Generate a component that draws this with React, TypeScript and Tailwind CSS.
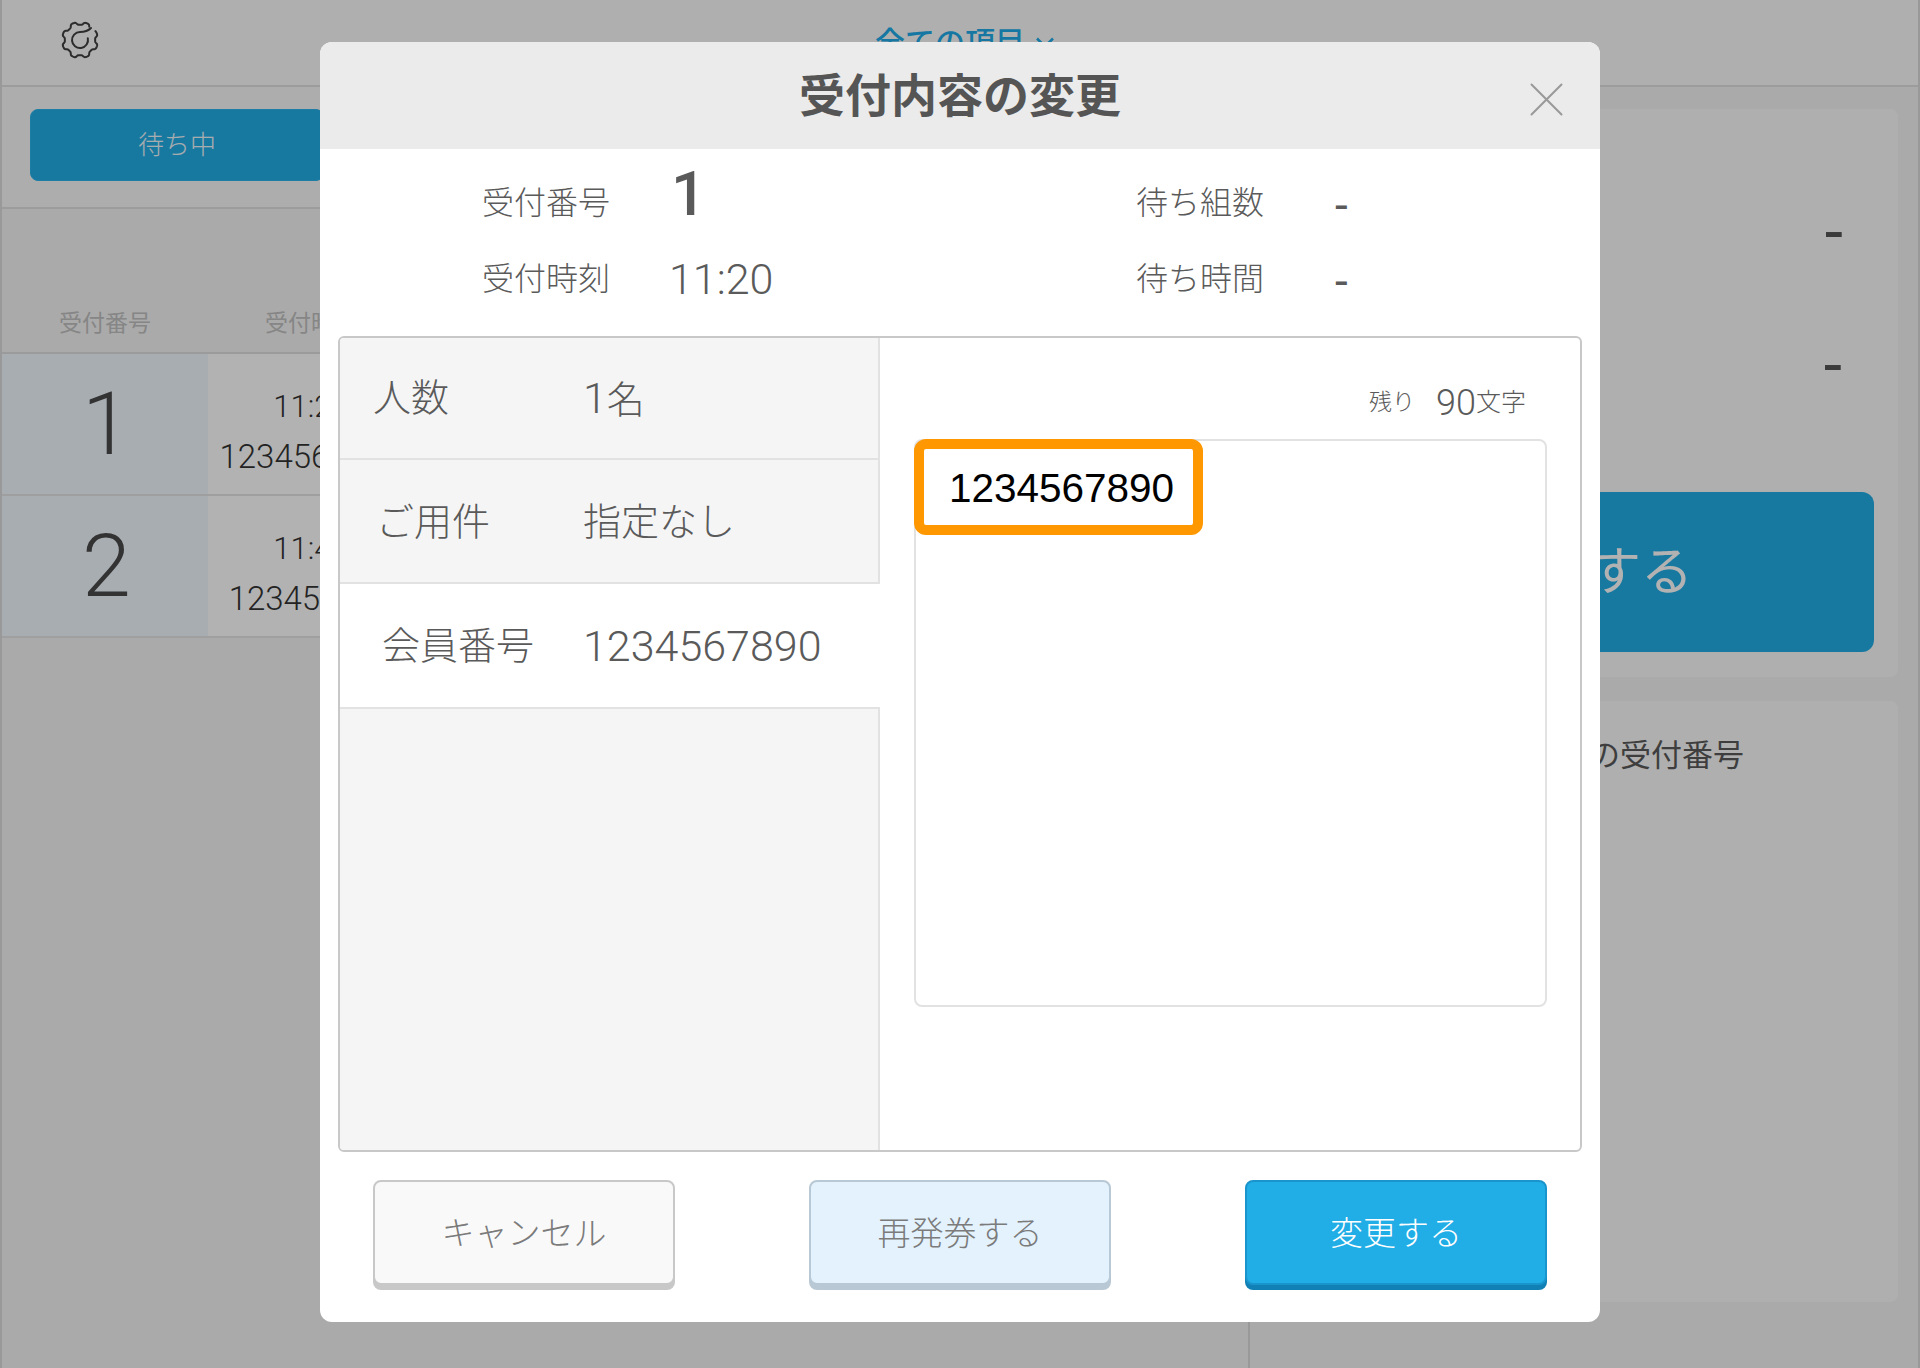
import type { ReactNode } from 'react';

const jp = "font-['Roboto','Noto_Sans_CJK_JP',sans-serif]";

// gear outline drawn as an open line, leaving a gap at the upper right
function gearPath() {
  const pts: string[] = [];
  const teeth = 8;
  const start = -30;
  const sweep = 335;
  for (let i = 0; i <= 200; i++) {
    const deg = start + (sweep * i) / 200;
    const a = (deg * Math.PI) / 180;
    const wave = Math.tanh(2 * Math.cos(teeth * (a + Math.PI / 8)));
    const r = 16.6 + 1.5 * wave;
    pts.push(`${(20 + r * Math.cos(a)).toFixed(2)} ${(20 + r * Math.sin(a)).toFixed(2)}`);
  }
  return 'M' + pts.join('L');
}

function GearIcon() {
  return (
    <svg width="40" height="40" viewBox="0 0 40 40" fill="none" stroke="#3f3f3f" strokeWidth="2" strokeLinecap="round">
      <path d={gearPath()} />
      <path d="M27.8 18.2A8 8 0 1 1 20 12Q27 12 31 8" />
    </svg>
  );
}

function CloseIcon() {
  return (
    <svg width="33" height="33" viewBox="0 0 33 33" fill="none" stroke="#999999" strokeWidth="2" strokeLinecap="round">
      <path d="M1.5 1.5L31.5 31.5M31.5 1.5L1.5 31.5" />
    </svg>
  );
}

function ChevronIcon() {
  return (
    <svg width="18" height="12" viewBox="0 0 18 12" fill="none" stroke="#20ade9" strokeWidth="2.5">
      <path d="M1 1.5L9 9.5L17 1.5" />
    </svg>
  );
}

function QueueRow({ num, time, member }: { num: string; time: string; member: string }) {
  return (
    <div className="flex h-[142px] border-b-2 border-[#e4e4e4]">
      <div className="flex w-[206px] items-center justify-center bg-[#f1f8ff] pl-[3px] text-[88px] font-light text-[#4a4a4a]">{num}</div>
      <div className="flex w-[206px] flex-col items-center justify-center gap-[16px] bg-white pt-[16px] font-light leading-[34px] text-[#333333]">
        <span className="text-[31px]">{time}</span>
        <span className="text-[33px]">{member}</span>
      </div>
      <div className="flex-1 bg-white" />
    </div>
  );
}

function Background() {
  return (
    <div className="flex h-full w-full flex-col border-x-2 border-[#dcdcdc] bg-[#f4f4f4]">
      <div className="flex h-[87px] items-start border-b-2 border-[#e0e0e0] bg-[#fbfbfb]">
        <div className="ml-[58px] mt-[20px]">
          <GearIcon />
        </div>
        <div className="ml-[775px] mt-[22px] flex items-center gap-[11px] text-[30px] font-medium leading-[42px] text-[#20ade9]">
          全ての項目
          <ChevronIcon />
        </div>
      </div>
      <div className="flex flex-1">
        <div className="w-[1246px]">
          <div className="h-[122px] border-b-2 border-[#e0e0e0] bg-[#f8f8f8] pl-[28px] pt-[22px]">
            <div className="flex h-[72px] w-[294px] items-center justify-center rounded-lg border border-[#2bb4ec] bg-[#21ade6] text-[26px] font-light text-[#f0f6fa]">待ち中</div>
          </div>
          <div className="flex h-[145px] items-end border-b-2 border-[#dedede] pb-[13px] text-[23px] leading-[30px] text-[#c0c0c0]">
            <span className="w-[206px] text-center">受付番号</span>
            <span className="w-[206px] text-center">受付時刻</span>
          </div>
          <QueueRow num="1" time="11:20" member="1234567890" />
          <QueueRow num="2" time="11:40" member="123456789" />
        </div>
        <div className="flex flex-1 flex-col gap-[24px] border-l-2 border-[#dcdcdc] pb-[20px] pl-[30px] pr-[20px] pt-[22px]">
          <div className="h-[568px] rounded-lg bg-[#fbfbfb] pt-[57px]">
            <div className="flex h-[133px] items-center justify-end pr-[55px] text-[66px] text-[#555555]">-</div>
            <div className="flex h-[133px] items-center justify-end pr-[56px] text-[66px] text-[#555555]">-</div>
            <div className="mx-[24px] mt-[60px] flex h-[160px] items-center justify-center rounded-xl bg-[#21ade6] pt-[2px] text-[52px] text-white">案内する</div>
          </div>
          <div className="flex h-[601px] items-start justify-end rounded-lg bg-[#fbfbfb] pr-[154px] pt-[35px] text-[31px] leading-[40px] text-[#5a5a5a]">現在の受付番号</div>
        </div>
      </div>
    </div>
  );
}

function DetailRow({ label, children, rowClass, labelClass }: { label: string; children: ReactNode; rowClass: string; labelClass: string }) {
  return (
    <div className={`flex items-center border-b-2 border-[#e2e2e2] ${rowClass}`}>
      <span className={`w-[243px] text-[38px] font-light ${labelClass}`}>{label}</span>
      <span className="text-[38px] font-light">{children}</span>
    </div>
  );
}

function FootButton({ label, className }: { label: string; className: string }) {
  return (
    <button className={`h-[105px] w-[302px] rounded-lg border-2 pt-[2px] text-[33px] font-light ${className}`}>{label}</button>
  );
}

function EditDialog() {
  return (
    <div className="flex h-[1280px] w-[1280px] flex-col overflow-hidden rounded-xl bg-white text-[#5a5a5a]">
      <div className="relative flex h-[107px] items-center justify-center bg-[#ebebeb] pt-[2px] text-[46px] font-bold text-[#555555]">
        受付内容の変更
        <div className="absolute right-[37px] top-[41px]">
          <CloseIcon />
        </div>
      </div>

      <div className="grid grid-cols-[185px_469px_199px_1fr] grid-rows-[76px_76px] items-center pl-[162px] pt-[16px] text-[32px] font-light">
        <span>受付番号</span>
        <span className="ml-[4px] -translate-y-[9px] text-[62px] font-medium leading-none">1</span>
        <span>待ち組数</span>
        <span className="translate-y-[2px] text-[46px] font-normal">-</span>
        <span>受付時刻</span>
        <span className="ml-[2px] text-[43px]">11:20</span>
        <span>待ち時間</span>
        <span className="translate-y-[2px] text-[46px] font-normal">-</span>
      </div>

      <div className="mx-[18px] mt-[19px] flex h-[816px] overflow-hidden rounded-md border-2 border-[#c8c8c8]">
        <div className="flex w-[540px] flex-col">
          <DetailRow label="人数" rowClass="h-[122px] border-r-2 bg-[#f5f5f5]" labelClass="pl-[33px]">
            <span className="text-[43px]">1</span>名
          </DetailRow>
          <DetailRow label="ご用件" rowClass="h-[124px] border-r-2 bg-[#f5f5f5] pt-[2px]" labelClass="pl-[36px]">指定なし</DetailRow>
          <DetailRow label="会員番号" rowClass="h-[125px] bg-white pt-[2px]" labelClass="pl-[42px]">
            <span className="text-[43px]">1234567890</span>
          </DetailRow>
          <div className="flex-1 border-r-2 border-[#e2e2e2] bg-[#f5f5f5]" />
        </div>
        <div className="flex-1 pl-[34px] pr-[33px]">
          <div className="flex h-[101px] items-center justify-end pr-[21px] pt-[29px] font-light">
            <span className="mr-[21px] text-[23px]">残り</span>
            <span className="text-[36px]">90</span>
            <span className="text-[25px]">文字</span>
          </div>
          <div className="relative h-[568px] rounded-lg border-2 border-[#e2e2e2]">
            <div className="absolute -left-[2px] -top-[2px] flex h-[96px] w-[289px] items-center justify-center rounded-xl border-[10px] border-[#ff9800] bg-white pl-[6px] pt-[3px] font-['Liberation_Sans',sans-serif] text-[40.5px] text-black">
              1234567890
            </div>
          </div>
        </div>
      </div>

      <div className="mt-[28px] flex justify-between px-[53px]">
        <FootButton label="キャンセル" className="border-[#c8c8c8] bg-[#f9f9f9] text-[#7b7b7b] shadow-[0_5px_0_#c8c8c8]" />
        <FootButton label="再発券する" className="border-[#b8c8d4] bg-[#e3f2fd] text-[#7b7b7b] shadow-[0_5px_0_#b8c8d4]" />
        <FootButton label="変更する" className="border-[#1a94cc] bg-[#21ade6] text-white shadow-[0_5px_0_#1080b5]" />
      </div>
    </div>
  );
}

export default function App() {
  return (
    <div className={`relative h-[1368px] w-[1920px] overflow-hidden ${jp}`}>
      <Background />
      <div className="absolute inset-0 flex justify-center bg-black/30 pt-[42px]">
        <EditDialog />
      </div>
    </div>
  );
}
